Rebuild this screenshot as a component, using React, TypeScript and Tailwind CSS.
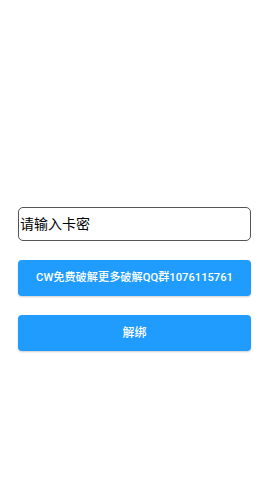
const App = () => {
  return (
    <div
      className="min-h-[480px] w-full bg-white pt-[207px] pl-[18px] pr-[19px]"
      style={{ fontFamily: "Roboto, 'Noto Sans CJK SC', sans-serif" }}
    >
      <input
        type="text"
        placeholder="请输入卡密"
        className="block h-[34px] w-full rounded-[5px] border border-[#555] px-[1px] text-[14px] text-black placeholder:text-black outline-none"
      />
      <button className="mt-[19px] flex h-[36px] w-full items-center justify-center rounded-[4px] bg-[#1f9cfe] text-[11.2px] font-medium text-white shadow-[0_1px_2px_rgba(0,0,0,0.2)]">
        CW免费破解更多破解QQ群1076115761
      </button>
      <button className="mt-[19px] flex h-[36px] w-full items-center justify-center rounded-[4px] bg-[#1f9cfe] text-[12px] font-medium text-white shadow-[0_1px_2px_rgba(0,0,0,0.2)]">
        解绑
      </button>
    </div>
  );
};

export default App;
